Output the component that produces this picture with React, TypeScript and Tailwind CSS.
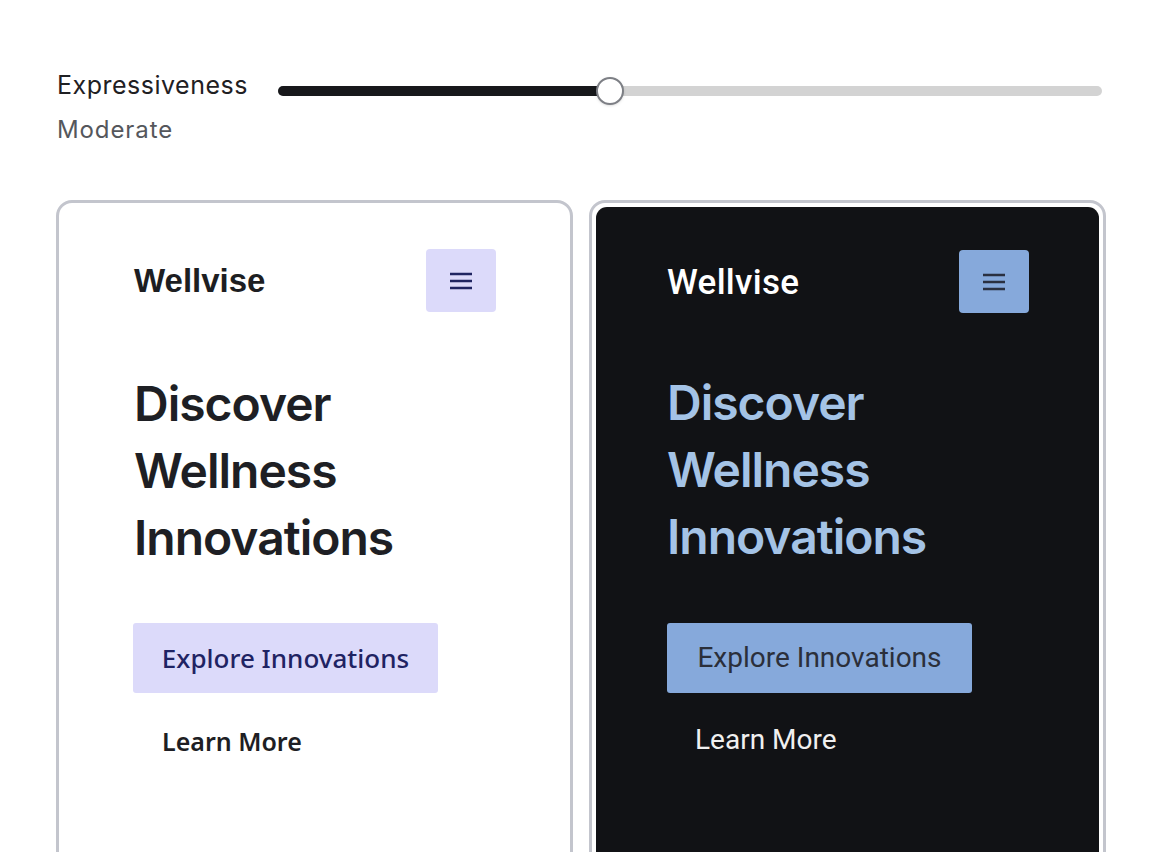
import React from "react";

function Burger({ color }: { color: string }) {
  return (
    <svg width="24" height="18" viewBox="0 0 24 18" fill="none">
      <path d="M1 2h22M1 9h22M1 16h22" stroke={color} strokeWidth="2.6" />
    </svg>
  );
}

export default function App() {
  const [value, setValue] = React.useState(40.3);

  return (
    <div className="min-h-[852px] bg-white pl-[56px] pr-[60px] pt-[70px] overflow-hidden font-['Inter',sans-serif]">
      {/* Slider */}
      <div className="flex items-start gap-[30px]">
        <div className="w-[192px] shrink-0">
          <div className="text-[25px] leading-[30px] text-[#1f2023] pl-[1px] tracking-[0.5px]">Expressiveness</div>
          <div className="mt-[15px] text-[24px] leading-[30px] text-[#55575c] pl-[1px] tracking-[0.9px]">Moderate</div>
        </div>
        <div className="relative flex-1 h-[30px] mt-[6px] mr-[4px]">
          <div className="absolute left-0 right-0 top-[10px] h-[10px] rounded-full bg-[#d3d3d3]" />
          <div
            className="absolute left-0 top-[10px] h-[10px] rounded-full bg-[#17181b]"
            style={{ width: `${value}%` }}
          />
          <div
            className="absolute top-[1px] w-[28px] h-[28px] -ml-[14px] rounded-full bg-white border-2 border-[#7d7f85] shadow-sm"
            style={{ left: `${value}%` }}
            onClick={() => setValue(value)}
          />
        </div>
      </div>

      {/* Cards */}
      <div className="grid grid-cols-2 gap-[16px] mt-[55px]">
        {/* Light */}
        <div className="h-[700px] rounded-[16px] border-[3px] border-[#c3c5cd] bg-white pl-[74px] pr-[74px] pt-[46px]">
          <div className="flex items-center justify-between pl-[1px]">
            <span className="font-['Liberation_Sans',sans-serif] font-bold text-[33px] text-[#1d1e22]">
              Wellvise
            </span>
            <div className="w-[70px] h-[63px] rounded-[4px] bg-[#dcdafa] flex items-center justify-center">
              <Burger color="#1f2461" />
            </div>
          </div>
          <h1 className="mt-[58px] pl-[1px] text-[48px] leading-[67px] font-semibold text-[#1e1f24] tracking-[-1px]">
            Discover
            <br />
            Wellness
            <br />
            Innovations
          </h1>
          <div className="mt-[52px]">
            <button className="w-[305px] h-[70px] rounded-[3px] bg-[#dcdafa] font-['Noto_Sans',sans-serif] font-medium text-[26px] text-[#1f2363]">
              Explore Innovations
            </button>
            <div className="mt-[30px] pl-[29px] font-['Noto_Sans',sans-serif] font-semibold text-[25px] text-[#1e1e24]">
              Learn More
            </div>
          </div>
        </div>

        {/* Dark */}
        <div className="h-[700px] rounded-[16px] border-[3px] border-[#c3c5cd] bg-white p-[4px]">
          <div className="h-full rounded-[11px] bg-[#111215] pl-[71px] pr-[70px] pt-[43px]">
            <div className="flex items-center justify-between">
              <span className="mt-[4px] font-['Roboto',sans-serif] font-medium text-[35px] text-white tracking-[0.3px]">Wellvise</span>
              <div className="w-[70px] h-[63px] rounded-[4px] bg-[#86a9db] flex items-center justify-center">
                <Burger color="#2a3040" />
              </div>
            </div>
            <h1 className="mt-[56px] text-[48px] leading-[67px] font-semibold text-[#a4c3e6] tracking-[-1px]">
              Discover
              <br />
              Wellness
              <br />
              Innovations
            </h1>
            <div className="mt-[53px]">
              <button className="w-[305px] h-[70px] rounded-[3px] bg-[#86a9db] font-['Roboto',sans-serif] text-[28px] text-[#2b2f3a]">
                Explore Innovations
              </button>
              <div className="mt-[26px] pl-[28px] font-['Roboto',sans-serif] text-[28px] text-[#f0f0f0]">
                Learn More
              </div>
            </div>
          </div>
        </div>
      </div>
    </div>
  );
}
